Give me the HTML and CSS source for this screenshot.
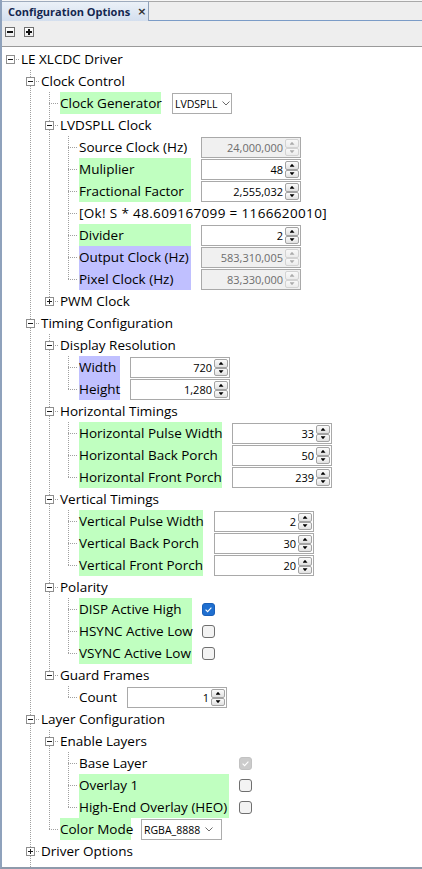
FILE: index.html
```html
<!DOCTYPE html>
<html>
<head>
<meta charset="utf-8">
<title>Configuration Options</title>
<link rel="stylesheet" href="styles.css">
</head>
<body>
<div class="panel">
  <div class="tabstrip">
    <div class="tab"><span class="tab-title">Configuration Options</span><span class="tab-close">×</span></div>
    <div class="tabfill"></div>
  </div>
  <div class="toolbar">
    <span class="tbtn"></span>
    <span class="tbtn plus"></span>
  </div>
  <div class="tree">
    <div class="node root">
      <div class="row"><span class="tw"><i class="exp"></i></span><span class="lbl">LE XLCDC Driver</span></div>
      <div class="kids first more">

        <div class="node cont">
          <div class="row"><span class="tw"><i class="exp"></i></span><span class="lbl">Clock Control</span></div>
          <div class="kids">
            <div class="node cont">
              <div class="row"><span class="tw"></span><span class="lbl hg wcg">Clock Generator</span><span class="combo cg"><span class="ctext">LVDSPLL</span><svg class="chev" width="8" height="5" viewBox="0 0 8 5"><polyline points="0.5,0.5 4,4 7.5,0.5" fill="none" stroke="#6b6b6b"/></svg></span></div>
            </div>
            <div class="node cont">
              <div class="row"><span class="tw"><i class="exp"></i></span><span class="lbl">LVDSPLL Clock</span></div>
              <div class="kids">
                <div class="node cont"><div class="row"><span class="tw"></span><span class="lbl wlv">Source Clock (Hz)</span><span class="spin dis m10"><span class="val">24,000,000</span><span class="arrows"><i class="up"></i><i class="dn"></i></span></span></div></div>
                <div class="node cont"><div class="row"><span class="tw"></span><span class="lbl hg wlv">Muliplier</span><span class="spin m10"><span class="val">48</span><span class="arrows"><i class="up"></i><i class="dn"></i></span></span></div></div>
                <div class="node cont"><div class="row"><span class="tw"></span><span class="lbl hg wlv">Fractional Factor</span><span class="spin m10"><span class="val">2,555,032</span><span class="arrows"><i class="up"></i><i class="dn"></i></span></span></div></div>
                <div class="node cont"><div class="row"><span class="tw"></span><span class="lbl ok">[Ok! S * 48.609167099 = 1166620010]</span></div></div>
                <div class="node cont"><div class="row"><span class="tw"></span><span class="lbl hg wlv">Divider</span><span class="spin m10"><span class="val">2</span><span class="arrows"><i class="up"></i><i class="dn"></i></span></span></div></div>
                <div class="node cont"><div class="row"><span class="tw"></span><span class="lbl hb wlv">Output Clock (Hz)</span><span class="spin dis m10"><span class="val">583,310,005</span><span class="arrows"><i class="up"></i><i class="dn"></i></span></span></div></div>
                <div class="node"><div class="row"><span class="tw"></span><span class="lbl hb wlv">Pixel Clock (Hz)</span><span class="spin dis m10"><span class="val">83,330,000</span><span class="arrows"><i class="up"></i><i class="dn"></i></span></span></div></div>
              </div>
            </div>
            <div class="node">
              <div class="row"><span class="tw"><i class="exp plus"></i></span><span class="lbl">PWM Clock</span></div>
            </div>
          </div>
        </div>

        <div class="node cont">
          <div class="row"><span class="tw"><i class="exp"></i></span><span class="lbl">Timing Configuration</span></div>
          <div class="kids">
            <div class="node cont">
              <div class="row"><span class="tw"><i class="exp"></i></span><span class="lbl">Display Resolution</span></div>
              <div class="kids">
                <div class="node cont"><div class="row"><span class="tw"></span><span class="lbl hb wdr">Width</span><span class="spin m10"><span class="val">720</span><span class="arrows"><i class="up"></i><i class="dn"></i></span></span></div></div>
                <div class="node"><div class="row"><span class="tw"></span><span class="lbl hb wdr">Height</span><span class="spin m10"><span class="val">1,280</span><span class="arrows"><i class="up"></i><i class="dn"></i></span></span></div></div>
              </div>
            </div>
            <div class="node cont">
              <div class="row"><span class="tw"><i class="exp"></i></span><span class="lbl">Horizontal Timings</span></div>
              <div class="kids">
                <div class="node cont"><div class="row"><span class="tw"></span><span class="lbl hg wht">Horizontal Pulse Width</span><span class="spin m10"><span class="val">33</span><span class="arrows"><i class="up"></i><i class="dn"></i></span></span></div></div>
                <div class="node cont"><div class="row"><span class="tw"></span><span class="lbl hg wht">Horizontal Back Porch</span><span class="spin m10"><span class="val">50</span><span class="arrows"><i class="up"></i><i class="dn"></i></span></span></div></div>
                <div class="node"><div class="row"><span class="tw"></span><span class="lbl hg wht">Horizontal Front Porch</span><span class="spin m10"><span class="val">239</span><span class="arrows"><i class="up"></i><i class="dn"></i></span></span></div></div>
              </div>
            </div>
            <div class="node cont">
              <div class="row"><span class="tw"><i class="exp"></i></span><span class="lbl">Vertical Timings</span></div>
              <div class="kids">
                <div class="node cont"><div class="row"><span class="tw"></span><span class="lbl hg wvt">Vertical Pulse Width</span><span class="spin m11"><span class="val">2</span><span class="arrows"><i class="up"></i><i class="dn"></i></span></span></div></div>
                <div class="node cont"><div class="row"><span class="tw"></span><span class="lbl hg wvt">Vertical Back Porch</span><span class="spin m11"><span class="val">30</span><span class="arrows"><i class="up"></i><i class="dn"></i></span></span></div></div>
                <div class="node"><div class="row"><span class="tw"></span><span class="lbl hg wvt">Vertical Front Porch</span><span class="spin m11"><span class="val">20</span><span class="arrows"><i class="up"></i><i class="dn"></i></span></span></div></div>
              </div>
            </div>
            <div class="node cont">
              <div class="row"><span class="tw"><i class="exp"></i></span><span class="lbl">Polarity</span></div>
              <div class="kids">
                <div class="node cont"><div class="row"><span class="tw"></span><span class="lbl hg wpo">DISP Active High</span><span class="cb on"><svg width="11" height="11" viewBox="0 0 11 11"><polyline points="2.6,5.6 4.6,7.6 8.4,3.6" fill="none" stroke="#ffffff" stroke-width="1.1"/></svg></span></div></div>
                <div class="node cont"><div class="row"><span class="tw"></span><span class="lbl hg wpo">HSYNC Active Low</span><span class="cb"></span></div></div>
                <div class="node"><div class="row"><span class="tw"></span><span class="lbl hg wpo">VSYNC Active Low</span><span class="cb"></span></div></div>
              </div>
            </div>
            <div class="node">
              <div class="row"><span class="tw"><i class="exp"></i></span><span class="lbl">Guard Frames</span></div>
              <div class="kids">
                <div class="node"><div class="row"><span class="tw"></span><span class="lbl wgf">Count</span><span class="spin m10"><span class="val">1</span><span class="arrows"><i class="up"></i><i class="dn"></i></span></span></div></div>
              </div>
            </div>
          </div>
        </div>

        <div class="node cont">
          <div class="row"><span class="tw"><i class="exp"></i></span><span class="lbl">Layer Configuration</span></div>
          <div class="kids">
            <div class="node cont">
              <div class="row"><span class="tw"><i class="exp"></i></span><span class="lbl">Enable Layers</span></div>
              <div class="kids">
                <div class="node cont"><div class="row"><span class="tw"></span><span class="lbl wel">Base Layer</span><span class="cb dison"><svg width="11" height="11" viewBox="0 0 11 11"><polyline points="2.6,5.6 4.6,7.6 8.4,3.6" fill="none" stroke="#ffffff" stroke-width="1.1"/></svg></span></div></div>
                <div class="node cont"><div class="row"><span class="tw"></span><span class="lbl hg wel">Overlay 1</span><span class="cb"></span></div></div>
                <div class="node"><div class="row"><span class="tw"></span><span class="lbl hg wel">High-End Overlay (HEO)</span><span class="cb"></span></div></div>
              </div>
            </div>
            <div class="node">
              <div class="row"><span class="tw"></span><span class="lbl hg wcm">Color Mode</span><span class="combo cm"><span class="ctext">RGBA_8888</span><svg class="chev" width="8" height="5" viewBox="0 0 8 5"><polyline points="0.5,0.5 4,4 7.5,0.5" fill="none" stroke="#6b6b6b"/></svg></span></div>
            </div>
          </div>
        </div>

        <div class="node cont">
          <div class="row"><span class="tw"><i class="exp plus"></i></span><span class="lbl">Driver Options</span></div>
        </div>

      </div>
    </div>
  </div>
</div>
</body>
</html>
```

FILE: styles.css
```css
html, body {
  margin: 0;
  padding: 0;
  background: #ffffff;
}

body {
  font-family: "Open Sans", "DejaVu Sans", sans-serif;
  color: #000000;
}

.panel {
  width: 422px;
  height: 869px;
  box-sizing: border-box;
  border-left: 2px solid #8fa2bc;
  border-bottom: 2px solid #8e9aab;
  display: flex;
  flex-direction: column;
  overflow: hidden;
}

/* ---------- tab strip ---------- */
.tabstrip {
  flex: none;
  height: 21px;
  display: flex;
  background: linear-gradient(#f6f6f6 0 1px, #a9a9a9 1px 2px, #eeeeee 2px);
}

.tab {
  flex: none;
  width: 147px;
  height: 20px;
  margin-top: 1px;
  box-sizing: border-box;
  border-top: 1px solid #9eabbd;
  border-right: 1px solid #8ea0b8;
  background: linear-gradient(#ebf1f8, #d4dfee);
  display: flex;
  align-items: center;
  padding-left: 6px;
}

.tab-title {
  font-family: "Open Sans", "DejaVu Sans", sans-serif;
  font-weight: bold;
  font-size: 11px;
  color: #14264f;
  white-space: nowrap;
}

.tab-close {
  margin-left: 7px;
  font-family: "DejaVu Sans", sans-serif;
  font-weight: bold;
  font-size: 11px;
  color: #303030;
  line-height: 1;
}

.tabfill {
  flex: 1;
  border-bottom: 1px solid #7b9cc7;
}

/* ---------- toolbar ---------- */
.toolbar {
  flex: none;
  height: 26px;
  box-sizing: border-box;
  border-bottom: 1px solid #9a9a9a;
  background: #eeeeee;
  display: flex;
  align-items: flex-start;
  gap: 9px;
  padding: 6px 0 0 3px;
}

.tbtn {
  width: 10px;
  height: 10px;
  box-sizing: border-box;
  border: 1px solid #6f6f6f;
  background:
    linear-gradient(#111, #111) center / 6px 2px no-repeat,
    linear-gradient(#ffffff, #ececec);
}

.tbtn.plus {
  background:
    linear-gradient(#111, #111) center / 6px 2px no-repeat,
    linear-gradient(#111, #111) center / 2px 6px no-repeat,
    linear-gradient(#ffffff, #ececec);
}

/* ---------- tree ---------- */
.tree {
  flex: 1;
  background: #ffffff;
  padding: 1px 0 0 2px;
  overflow: hidden;
}

.kids {
  margin-left: 19px;
}

.kids.first {
  margin-left: 20px;
}

.node.cont,
.kids.more {
  background: repeating-linear-gradient(to bottom, #a0a0a0 0 1px, transparent 1px 2px) 6px 0 / 1px 100% no-repeat;
}

.kids.more {
  padding-bottom: 5px;
}

.row {
  display: flex;
  align-items: flex-start;
  height: 22px;
}

.tw {
  flex: none;
  width: 17px;
  height: 22px;
  display: flex;
  align-items: flex-start;
  background:
    repeating-linear-gradient(to right, #a0a0a0 0 1px, transparent 1px 2px) 6px 11px / 9px 1px no-repeat,
    repeating-linear-gradient(to bottom, #a0a0a0 0 1px, transparent 1px 2px) 6px 0 / 1px 11px no-repeat;
}

.root > .row > .tw {
  background: repeating-linear-gradient(to right, #a0a0a0 0 1px, transparent 1px 2px) 6px 11px / 9px 1px no-repeat;
}

.exp {
  display: block;
  width: 9px;
  height: 9px;
  margin: 7px 0 0 2px;
  box-sizing: border-box;
  border: 1px solid #8e8e8e;
  background:
    linear-gradient(#1a1a1a, #1a1a1a) center / 5px 1px no-repeat,
    #ffffff;
}

.exp.plus {
  background:
    linear-gradient(#1a1a1a, #1a1a1a) center / 5px 1px no-repeat,
    linear-gradient(#1a1a1a, #1a1a1a) center / 1px 5px no-repeat,
    #ffffff;
}

.lbl {
  flex: none;
  height: 22px;
  font-size: 13.5px;
  line-height: 22px;
  white-space: nowrap;
  color: #000000;
}

.lbl.ok {
  letter-spacing: 0.35px;
}

.hg { background: #c0ffc0; }
.hb { background: #c0c0ff; }

.wcg { width: 101px; }
.wlv { width: 112px; }
.wdr { width: 41px; }
.wht { width: 143px; }
.wvt { width: 124px; }
.wpo { width: 113px; }
.wgf { width: 38px; }
.wel { width: 150px; }
.wcm { width: 71px; }

/* ---------- spinner ---------- */
.spin {
  flex: none;
  width: 100px;
  height: 21px;
  margin-top: 1px;
  box-sizing: border-box;
  border: 1px solid #a9a9a9;
  background: #ffffff;
  display: flex;
}

.spin.m10 { margin-left: 10px; }
.spin.m11 { margin-left: 11px; }

.spin .val {
  flex: 1;
  text-align: right;
  padding-right: 2px;
  font-size: 11px;
  line-height: 19px;
  color: #000000;
}

.spin.dis {
  background: #f0f0f0;
}

.spin.dis .val {
  color: #6d6d6d;
}

.arrows {
  flex: none;
  width: 14px;
  margin: 1px 1px 1px 0;
  display: flex;
  flex-direction: column;
}

.arrows i {
  flex: 1;
  box-sizing: border-box;
  border: 1px solid #a3a3a3;
  border-radius: 2px;
  background: linear-gradient(#fbfbfb, #e1e1e1);
  display: flex;
  align-items: center;
  justify-content: center;
}

.arrows i::before {
  content: "";
  width: 5px;
  height: 3px;
  background: #000000;
}

.arrows .up::before {
  clip-path: polygon(50% 0, 100% 100%, 0 100%);
}

.arrows .dn::before {
  clip-path: polygon(0 0, 100% 0, 50% 100%);
}

.spin.dis .arrows i {
  border-color: #d3d3d3;
  background: linear-gradient(#f8f8f8, #ececec);
}

.spin.dis .arrows i::before {
  background: #ababab;
}

/* ---------- combo ---------- */
.combo {
  flex: none;
  height: 21px;
  margin-top: 1px;
  box-sizing: border-box;
  border: 1px solid #acacac;
  background: #ffffff;
  display: flex;
  align-items: center;
  padding-left: 2px;
  font-size: 10.5px;
  color: #000000;
  white-space: nowrap;
}

.combo .chev {
  flex: none;
  margin-left: auto;
}

.combo.cg {
  width: 60px;
  margin-left: 11px;
}

.combo.cg .chev { margin-right: 1px; }

.combo.cm {
  width: 81px;
  margin-left: 10px;
}

.combo.cm .chev { margin-right: 8px; }

/* ---------- checkbox ---------- */
.cb {
  flex: none;
  width: 13px;
  height: 13px;
  margin: 5px 0 0 10px;
  box-sizing: border-box;
  border: 1px solid #6f6f6f;
  border-radius: 3px;
  background: #f3f3f3;
  display: flex;
}

.cb.on {
  border-color: #1a5fb8;
  background: #1f6fd0;
}

.cb.dison {
  border-color: #c2c2c2;
  background: #cbcbcb;
}
```
